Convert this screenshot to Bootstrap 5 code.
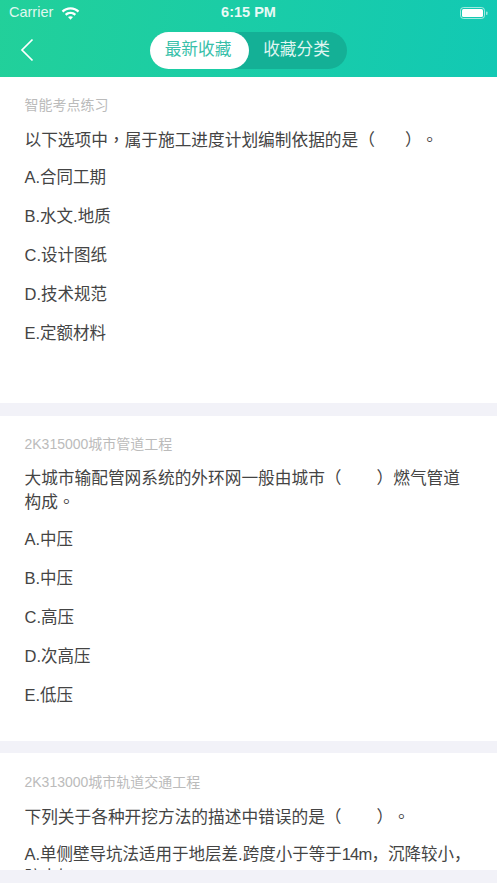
<!DOCTYPE html>
<html lang="zh">
<head>
<meta charset="utf-8">
<title>收藏</title>
<link rel="stylesheet" href="https://cdn.jsdelivr.net/npm/bootstrap@5.3.0/dist/css/bootstrap.min.css">
<style>
html,body{height:883px;overflow:hidden}
body{background:#f2f2f8;font-family:"Liberation Sans","Noto Sans CJK SC",sans-serif;color:#333}
.app-head{height:77px;background:linear-gradient(100deg,#22d09a,#12c9b4);color:#fff}
.status-row{height:25px;padding:0 9px;font-size:14.500px;line-height:25px}
.carrier{opacity:.85}
.clock{left:0;right:0;top:0;text-align:center;font-weight:700;font-size:14.500px;opacity:.9}
.nav-row{height:52px;padding-top:7px}
.back-ico{left:20px;top:13px}
.seg{width:197px;height:37px;background:#14b096;border-radius:19px;margin:0 auto}
.seg-item{width:99px;height:37px;line-height:36px;text-align:center;font-size:16.700px;border-radius:19px;padding-right:3px}
.seg-on{background:#fff;color:#38bfa9}
.seg-off{color:#dff5f0;flex:1}
.q-block{background:#fff;padding:0 24.500px;margin-bottom:13px;white-space:nowrap}
.q-a{height:326px;padding-top:18px}
.q-b{height:325px;padding-top:18px;margin-bottom:12px}
.q-c{height:117px;padding-top:19px;margin-bottom:0;overflow:hidden}
.q-src{font-size:14px;line-height:20px;color:#bbb}
.q-text{font-size:16.700px;line-height:23px;color:#444;margin:13px 0 -2px}
.q-opt{font-size:16.500px;line-height:23px;color:#444;margin:16px 0 0}
.blank-a{display:inline-block;width:30px}
.blank-b{display:inline-block;width:35px}
.pc-tc{font-family:"Noto Sans CJK TC",sans-serif}
.pc-stop{margin-left:8px}
.lat-tight{letter-spacing:-.8px}
</style>
</head>
<body>
<header class="app-head">
  <div class="status-row d-flex align-items-center justify-content-between position-relative">
    <div class="d-flex align-items-center gap-2">
      <span class="carrier">Carrier</span>
      <svg width="19" height="14" viewBox="0 0 19 14" fill="#fff"><path d="M9.5 1.2C6 1.2 3 2.5.7 4.7l1.6 1.7C4.2 4.6 6.7 3.5 9.5 3.5s5.3 1.1 7.2 2.9l1.6-1.7C16 2.5 13 1.2 9.5 1.2zM3.9 8l1.6 1.7C6.6 8.7 8 8.1 9.500 8.100s2.900.6 4 1.600L15.100 8C13.600 6.600 11.700 5.800 9.500 5.800S5.400 6.600 3.900 8zM7 11.100l2.500 2.600 2.500-2.600c-.7-.6-1.500-.9-2.500-.9s-1.800.3-2.500.9z"/></svg>
    </div>
    <div class="clock position-absolute">6:15 PM</div>
    <svg width="28" height="14" viewBox="0 0 28 14"><rect x=".5" y="1.500" width="24" height="11" rx="3" fill="none" stroke="#fff" stroke-opacity=".6"/><rect x="2" y="3" width="21" height="8" rx="1.500" fill="#fff"/><rect x="26" y="5.500" width="1.500" height="3.500" rx=".7" fill="#fff" fill-opacity=".6"/></svg>
  </div>
  <div class="nav-row position-relative">
    <svg class="back-ico position-absolute" width="14" height="24" viewBox="0 0 14 24" fill="none" stroke="#fff" stroke-width="1.700"><path d="M12.500 1.500 2 12l10.500 10.500"/></svg>
    <div class="seg d-flex">
      <div class="seg-item seg-on">最新收藏</div>
      <div class="seg-item seg-off">收藏分类</div>
    </div>
  </div>
</header>
<main>
  <section class="q-block q-a">
    <div class="q-src">智能考点练习</div>
    <p class="q-text">以下选项中<span class="pc-tc" lang="zh-Hant">，</span>属于施工进度计划编制依据的是（<span class="blank-a"></span>）<span class="pc-tc pc-stop" lang="zh-Hant">。</span></p>
    <p class="q-opt">A.合同工期</p>
    <p class="q-opt">B.水文.地质</p>
    <p class="q-opt">C.设计图纸</p>
    <p class="q-opt">D.技术规范</p>
    <p class="q-opt">E.定额材料</p>
  </section>
  <section class="q-block q-b">
    <div class="q-src">2K315000城市管道工程</div>
    <p class="q-text">大城市输配管网系统的外环网一般由城市（<span class="blank-b"></span>）燃气管道<br>构成<span class="pc-tc" lang="zh-Hant">。</span></p>
    <p class="q-opt">A.中压</p>
    <p class="q-opt">B.中压</p>
    <p class="q-opt">C.高压</p>
    <p class="q-opt">D.次高压</p>
    <p class="q-opt">E.低压</p>
  </section>
  <section class="q-block q-c">
    <div class="q-src">2K313000城市轨道交通工程</div>
    <p class="q-text">下列关于各种开挖方法的描述中错误的是（<span class="blank-b"></span>）<span class="pc-tc pc-stop" lang="zh-Hant">。</span></p>
    <p class="q-opt">A.单侧壁导坑法适用于地层差.跨度小于等于<span class="lat-tight">14m</span>，沉降较小，<br>防水好</p>
  </section>
</main>
</body>
</html>
